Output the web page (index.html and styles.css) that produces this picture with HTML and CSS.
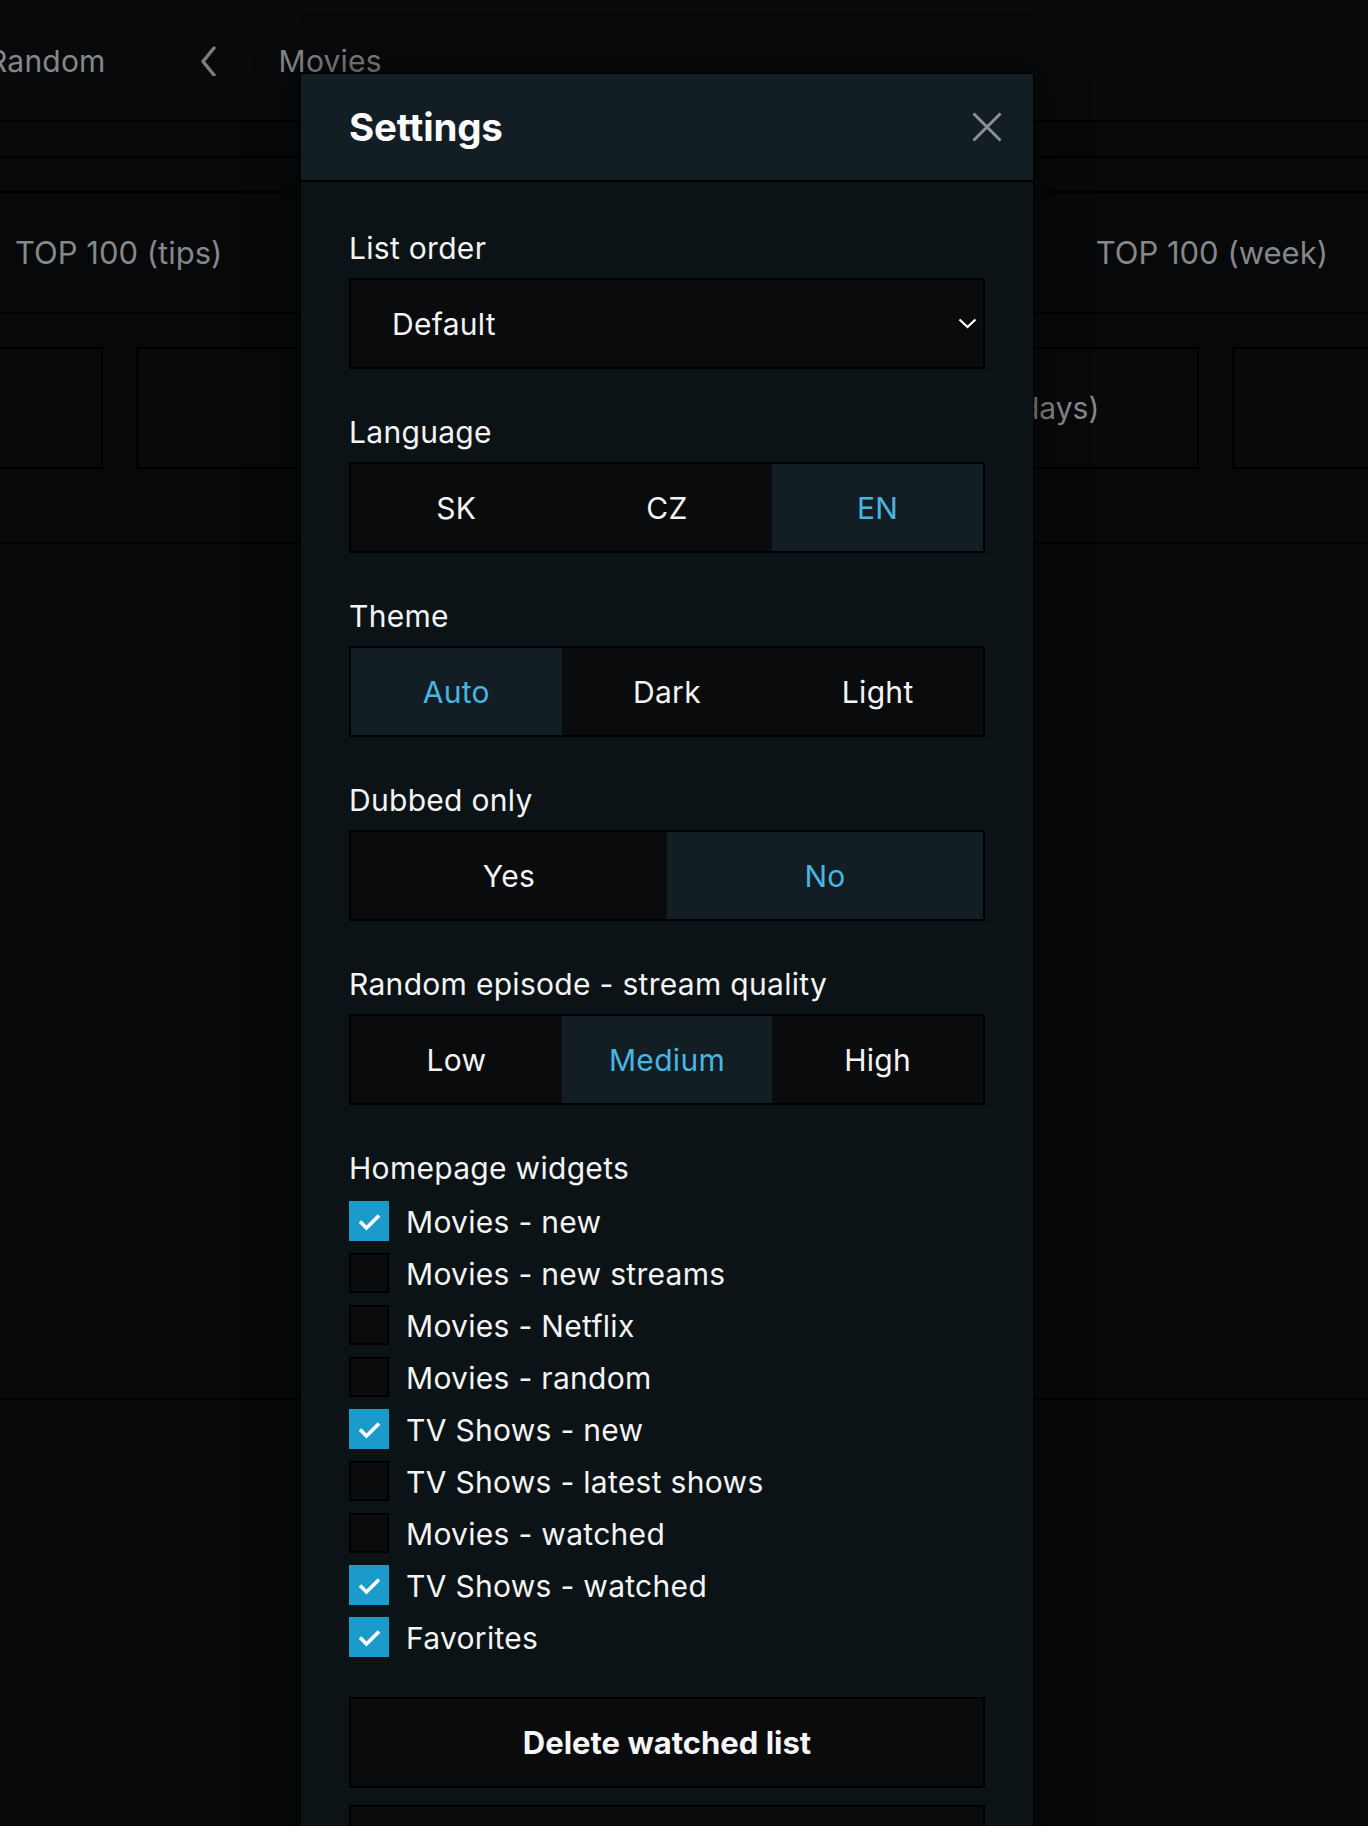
FILE: index.html
```html
<!DOCTYPE html>
<html lang="en">
<head>
<meta charset="utf-8">
<title>Settings</title>
<link rel="stylesheet" href="styles.css">
</head>
<body>
<div class="page">
  <header class="topnav">
    <span class="nav-item nav-random">Random</span>
    <svg class="nav-back" width="16" height="30" viewBox="0 0 16 30"><polyline points="13,2 2,15.5 13,29" fill="none" stroke="#7a7c7e" stroke-width="3.5" stroke-linecap="round" stroke-linejoin="round"/></svg>
    <span class="nav-item">Movies</span>
  </header>
  <div class="band"></div>
  <div class="band band-2"></div>
  <nav class="tabs">
    <span class="tab">TOP 100 (tips)</span>
    <span class="tab">TOP 100 (month)</span>
    <span class="tab">TOP 100 (week)</span>
  </nav>
  <section class="cards-section">
    <div class="cards">
      <div class="card card-a"></div>
      <div class="card card-b"></div>
      <div class="card card-c">Most watched (last 30 days)</div>
      <div class="card card-d"></div>
    </div>
  </section>
  <section class="content"></section>
  <section class="rest"></section>
</div>

<div class="modal">
  <div class="modal-header">
    <h1 class="modal-title">Settings</h1>
    <svg class="close" width="30" height="30" viewBox="0 0 30 30"><path d="M1.5 1.5 L28.5 28.5 M28.5 1.5 L1.5 28.5" stroke="#8a9095" stroke-width="3" fill="none"/></svg>
  </div>
  <div class="modal-body">
    <div class="field">
      <div class="label">List order</div>
      <div class="select">
        <span>Default</span>
        <svg class="select-arrow" width="19" height="11" viewBox="0 0 19 11"><polyline points="1.5,1.5 9.5,9 17.5,1.5" fill="none" stroke="#ffffff" stroke-width="2.2"/></svg>
      </div>
    </div>
    <div class="field">
      <div class="label">Language</div>
      <div class="seg seg-3">
        <div class="opt">SK</div>
        <div class="opt">CZ</div>
        <div class="opt active">EN</div>
      </div>
    </div>
    <div class="field">
      <div class="label">Theme</div>
      <div class="seg seg-3">
        <div class="opt active">Auto</div>
        <div class="opt">Dark</div>
        <div class="opt">Light</div>
      </div>
    </div>
    <div class="field">
      <div class="label">Dubbed only</div>
      <div class="seg seg-2">
        <div class="opt">Yes</div>
        <div class="opt active">No</div>
      </div>
    </div>
    <div class="field">
      <div class="label">Random episode - stream quality</div>
      <div class="seg seg-3">
        <div class="opt">Low</div>
        <div class="opt active">Medium</div>
        <div class="opt">High</div>
      </div>
    </div>
    <div class="field widgets">
      <div class="label">Homepage widgets</div>
      <ul class="checks">
        <li class="check"><span class="box on"><svg width="40" height="40" viewBox="0 0 40 40"><polyline points="11,20.5 17.5,27 30,14.5" fill="none" stroke="#fff" stroke-width="3.6"/></svg></span>Movies - new</li>
        <li class="check"><span class="box"></span>Movies - new streams</li>
        <li class="check"><span class="box"></span>Movies - Netflix</li>
        <li class="check"><span class="box"></span>Movies - random</li>
        <li class="check"><span class="box on"><svg width="40" height="40" viewBox="0 0 40 40"><polyline points="11,20.5 17.5,27 30,14.5" fill="none" stroke="#fff" stroke-width="3.6"/></svg></span>TV Shows - new</li>
        <li class="check"><span class="box"></span>TV Shows - latest shows</li>
        <li class="check"><span class="box"></span>Movies - watched</li>
        <li class="check"><span class="box on"><svg width="40" height="40" viewBox="0 0 40 40"><polyline points="11,20.5 17.5,27 30,14.5" fill="none" stroke="#fff" stroke-width="3.6"/></svg></span>TV Shows - watched</li>
        <li class="check"><span class="box on"><svg width="40" height="40" viewBox="0 0 40 40"><polyline points="11,20.5 17.5,27 30,14.5" fill="none" stroke="#fff" stroke-width="3.6"/></svg></span>Favorites</li>
      </ul>
    </div>
    <div class="actions">
      <button class="btn">Delete watched list</button>
      <button class="btn">Delete favorites</button>
    </div>
  </div>
</div>
</body>
</html>
```

FILE: styles.css
```css
* { box-sizing: border-box; }

html, body {
  margin: 0;
  padding: 0;
}

body {
  background: #06080a;
  font-family: Inter, "Noto Sans", "DejaVu Sans", sans-serif;
  color: #f2f2f2;
  width: 1368px;
  height: 1826px;
  overflow: hidden;
  position: relative;
}

/* ---------- background page ---------- */
.page {
  width: 1368px;
  color: #858789;
}

.topnav {
  height: 122px;
  border-bottom: 2px solid #000;
  background: #07090b;
  display: flex;
  align-items: center;
  padding-top: 2px;
  overflow: hidden;
}

.nav-item {
  font-size: 30px;
  line-height: 1;
  white-space: nowrap;
  letter-spacing: 0.2px;
}

.nav-random {
  margin-left: -12px;
}

.nav-back {
  margin-left: 95px;
  margin-right: 62px;
  flex: none;
}

.band {
  height: 36px;
  border-bottom: 2px solid #000;
  background: #06080a;
}

.band-2 {
  height: 35px;
}

.tabs {
  height: 121px;
  border-bottom: 2px solid #000;
  display: flex;
  align-items: center;
  justify-content: space-between;
  padding: 0 40px 0 15px;
  overflow: hidden;
}

.tab {
  font-size: 31px;
  line-height: 1;
  white-space: nowrap;
}

.cards-section {
  height: 230px;
  border-bottom: 2px solid #000;
  padding-top: 33px;
  overflow: hidden;
}

.cards {
  display: flex;
  gap: 33px;
  margin-left: -97px;
}

.card {
  flex: none;
  height: 122px;
  border: 2px solid #000;
  background: #07090b;
  display: flex;
  align-items: center;
  justify-content: center;
  font-size: 30px;
  white-space: nowrap;
}

.card-a { width: 200px; }
.card-b { width: 428px; }
.card-c { width: 602px; }
.card-d { width: 200px; }

.content {
  height: 856px;
  border-bottom: 2px solid #000;
}

.rest {
  height: 426px;
}

/* ---------- modal ---------- */
.modal {
  position: absolute;
  left: 300px;
  top: 73px;
  width: 734px;
  border: 1px solid #000;
  background: #0b1316;
  box-shadow: 0 0 40px rgba(0, 0, 0, 0.6);
}

.modal-header {
  height: 108px;
  background: #121e24;
  border-bottom: 2px solid #000;
  display: flex;
  align-items: center;
  justify-content: space-between;
  padding: 0 31px 0 48px;
}

.modal-title {
  margin: 0;
  font-size: 38.5px;
  font-weight: 700;
  line-height: 1;
  color: #fbfbfb;
  letter-spacing: -0.2px;
}

.close {
  display: block;
}

.modal-body {
  padding: 48px 48px 0 48px;
}

.field {
  margin-bottom: 45px;
}

.label {
  font-size: 30px;
  letter-spacing: 0.3px;
  line-height: 36px;
  height: 36px;
  margin-bottom: 12px;
  white-space: nowrap;
  color: #f4f4f4;
}

.select {
  height: 91px;
  border: 2px solid #000;
  background: #0a0b0d;
  display: flex;
  align-items: center;
  justify-content: space-between;
  padding: 0 6px 0 41px;
  font-size: 30px;
  letter-spacing: 0.3px;
  color: #f4f4f4;
}

.select-arrow {
  display: block;
}

.seg {
  height: 91px;
  border: 2px solid #000;
  background: #0a0b0d;
  display: grid;
}

.seg-3 { grid-template-columns: 1fr 1fr 1fr; }
.seg-2 { grid-template-columns: 1fr 1fr; }

.opt {
  display: flex;
  align-items: center;
  justify-content: center;
  font-size: 30px;
  letter-spacing: 0.3px;
  color: #f4f4f4;
}

.opt.active {
  background: #121e24;
  color: #48b6e0;
}

.widgets {
  margin-bottom: 40px;
}

.widgets .label {
  margin-bottom: 15px;
}

.checks {
  list-style: none;
  margin: 0;
  padding: 0;
  display: flex;
  flex-direction: column;
  gap: 12px;
}

.check {
  display: flex;
  align-items: center;
  height: 40px;
  padding-top: 1px;
  font-size: 30px;
  color: #f4f4f4;
  letter-spacing: 0.3px;
}

.box {
  flex: none;
  width: 40px;
  height: 40px;
  margin-right: 17px;
  margin-top: -1px;
  border: 2px solid #000;
  background: #0a0b0d;
  position: relative;
}

.box.on {
  border: none;
  background: #1a9bcb;
}

.box svg {
  display: block;
}

.actions {
  display: flex;
  flex-direction: column;
  gap: 17px;
}

.btn {
  height: 91px;
  width: 100%;
  border: 2px solid #000;
  background: #0a0b0d;
  color: #f6f6f6;
  font-family: Inter, "Noto Sans", sans-serif;
  font-size: 31px;
  font-weight: 700;
}
```
